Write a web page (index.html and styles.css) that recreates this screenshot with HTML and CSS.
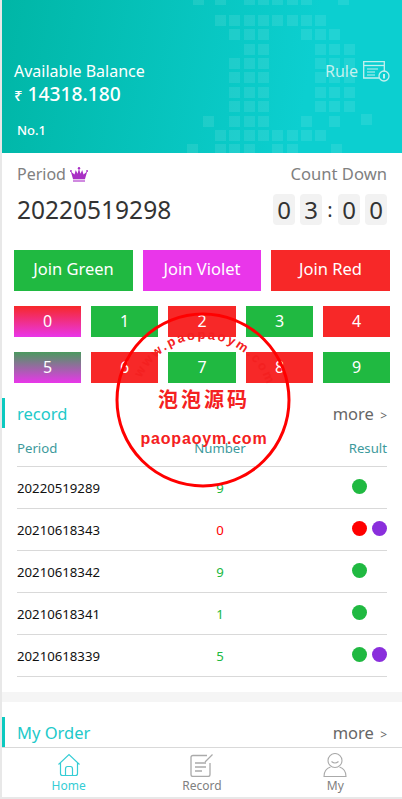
FILE: index.html
```html
<!DOCTYPE html>
<html>
<head>
    <title>Win</title>
    <meta name="viewport" content="width=device-width, initial-scale=1">
    <link rel="stylesheet" href="styles.css">
</head>
<body>
    <div class="page">
        <div class="content">
            <div class="hero">
                <svg class="hero-dots" width="400" height="153" viewBox="0 0 400 153">
                    <path d="M191 -6h11v11h-11z M213 -6h11v11h-11z M242 -6h11v11h-11z M256 -6h11v11h-11z M270 -6h11v11h-11z M285 -6h11v11h-11z M299 -6h11v11h-11z M336 -6h11v11h-11z
                             M213 15h11v11h-11z M227 15h11v11h-11z M242 15h11v11h-11z M256 15h11v11h-11z M270 15h11v11h-11z M285 15h11v11h-11z M299 15h11v11h-11z M313 15h11v11h-11z
                             M227 29h11v11h-11z M242 29h11v11h-11z M256 29h11v11h-11z M299 29h11v11h-11z M313 29h11v11h-11z M327 29h11v11h-11z
                             M242 44h11v11h-11z M256 44h11v11h-11z M313 44h11v11h-11z M327 44h11v11h-11z M342 44h11v11h-11z
                             M227 58h11v11h-11z M242 58h11v11h-11z M256 58h11v11h-11z M313 58h11v11h-11z M327 58h11v11h-11z M342 58h11v11h-11z
                             M227 72h11v11h-11z M242 72h11v11h-11z M256 72h11v11h-11z M313 72h11v11h-11z M327 72h11v11h-11z M342 72h11v11h-11z
                             M227 87h11v11h-11z M242 87h11v11h-11z M256 87h11v11h-11z M313 87h11v11h-11z M327 87h11v11h-11z M342 87h11v11h-11z
                             M227 101h11v11h-11z M242 101h11v11h-11z M256 101h11v11h-11z M313 101h11v11h-11z M327 101h11v11h-11z M342 101h11v11h-11z
                             M201 116h11v11h-11z M227 116h11v11h-11z M242 116h11v11h-11z M256 116h11v11h-11z M299 116h11v11h-11z M327 116h11v11h-11z M359 114h11v11h-11z
                             M213 130h11v11h-11z M227 130h11v11h-11z M242 130h11v11h-11z M256 130h11v11h-11z M270 130h11v11h-11z M285 130h11v11h-11z M299 130h11v11h-11z M313 130h11v11h-11z
                             M185 144h11v11h-11z M213 144h11v11h-11z M227 144h11v11h-11z M242 144h11v11h-11z M270 144h11v11h-11z M285 144h11v11h-11z M329 144h11v11h-11z"/>
                </svg>
                <div class="hero-row">
                    <div class="balance-label">Available Balance</div>
                    <div class="rule">
                        Rule
                        <svg width="27" height="21" viewBox="0 0 27 21" fill="none" stroke="#c4f1ef" stroke-width="1.300">
                            <path d="M16 17H.7V.7h20.600v10"/>
                            <path d="M1 4.500h20"/>
                            <path d="M4 8h11M4 11h8M4 14h8" stroke-width="1.100"/>
                            <circle cx="21" cy="15" r="5"/>
                            <path d="M21 13v4.500" stroke-width="2"/>
                        </svg>
                    </div>
                </div>
                <div class="balance"><span class="rupee">₹</span> 14318.180</div>
                <div class="rank">No.1</div>
            </div>

            <div class="game">
                <div class="period-row period-labels">
                    <div class="muted">Period
                        <svg class="crown" width="18" height="15" viewBox="0 0 18 15">
                            <path fill="#a92fc4" d="M3 12 .8 4.500l3.700 3L5.800 3 7.500 6.800 9 1.500l1.500 5.300L12.200 3l1.300 4.500 3.700-3L15 12z"/>
                            <circle fill="#a92fc4" cx=".9" cy="4" r="1"/>
                            <circle fill="#a92fc4" cx="9" cy="1.300" r="1.200"/>
                            <circle fill="#a92fc4" cx="17.100" cy="4" r="1"/>
                            <path fill="#d08ae0" d="M3 12.500h12V15H3z"/>
                        </svg>
                    </div>
                    <div class="muted countdown-label">Count Down</div>
                </div>
                <div class="period-row period-values">
                    <div class="period-no">20220519298</div>
                    <div class="timer">
                        <span class="digit">0</span>
                        <span class="digit">3</span>
                        <span class="colon">:</span>
                        <span class="digit">0</span>
                        <span class="digit">0</span>
                    </div>
                </div>

                <div class="joins">
                    <div class="join green">Join Green</div>
                    <div class="join violet">Join Violet</div>
                    <div class="join red">Join Red</div>
                </div>

                <div class="numbers">
                    <div class="num red-violet">0</div>
                    <div class="num green">1</div>
                    <div class="num red">2</div>
                    <div class="num green">3</div>
                    <div class="num red">4</div>
                    <div class="num green-violet">5</div>
                    <div class="num red">6</div>
                    <div class="num green">7</div>
                    <div class="num red">8</div>
                    <div class="num green">9</div>
                </div>
            </div>

            <div class="section-head">
                <div class="section-title">record</div>
                <div class="more">more <small>&gt;</small></div>
            </div>
            <div class="table">
                <div class="tr th">
                    <div>Period</div>
                    <div class="c-num">Number</div>
                    <div class="c-res">Result</div>
                </div>
                <div class="tr">
                    <div>20220519289</div>
                    <div class="c-num t-green">9</div>
                    <div class="c-res"><i class="dot d-green"></i><i class="dot"></i></div>
                </div>
                <div class="tr">
                    <div>20210618343</div>
                    <div class="c-num t-red">0</div>
                    <div class="c-res"><i class="dot d-red"></i><i class="dot d-violet"></i></div>
                </div>
                <div class="tr">
                    <div>20210618342</div>
                    <div class="c-num t-green">9</div>
                    <div class="c-res"><i class="dot d-green"></i><i class="dot"></i></div>
                </div>
                <div class="tr">
                    <div>20210618341</div>
                    <div class="c-num t-green">1</div>
                    <div class="c-res"><i class="dot d-green"></i><i class="dot"></i></div>
                </div>
                <div class="tr">
                    <div>20210618339</div>
                    <div class="c-num t-green">5</div>
                    <div class="c-res"><i class="dot d-green"></i><i class="dot d-violet"></i></div>
                </div>
            </div>

            <div class="divider"></div>

            <div class="section-head order-head">
                <div class="section-title">My Order</div>
                <div class="more">more <small>&gt;</small></div>
            </div>
        </div>

        <div class="nav">
            <div class="nav-item active">
                <svg width="24" height="24" viewBox="0 0 24 24" fill="none" stroke="#35cdd5" stroke-width="1.200">
                    <path d="M1.500 11.500 12 1.500l10.500 10"/>
                    <path d="M3.500 10v10.500q0 2 2 2h13q2 0 2-2V10"/>
                    <path d="M8.500 22v-6q0-2.500 2-2.500h3q2 0 2 2.500v6"/>
                </svg>
                <span>Home</span>
            </div>
            <div class="nav-item">
                <svg width="24" height="24" viewBox="0 0 24 24" fill="none" stroke="#aaa" stroke-width="1.300">
                    <path d="M17 2.500H3q-2 0-2 2v17q0 2 2 2h15q2 0 2-2V10"/>
                    <path d="M5 10h11M5 14h11M5 18h7"/>
                    <path d="M15 9l7.500-7.500"/>
                </svg>
                <span>Record</span>
            </div>
            <div class="nav-item">
                <svg width="24" height="24" viewBox="0 0 24 24" fill="none" stroke="#aaa" stroke-width="1.100">
                    <circle cx="12" cy="7.500" r="7"/>
                    <path d="M8.500 8.500q3.500 3 7 0"/>
                    <path d="M7.500 14C3 15.500 1 19 1 23.500h22c0-4.500-2-8-6.500-9.500"/>
                </svg>
                <span>My</span>
            </div>
        </div>

        <svg class="stamp" width="180" height="180" viewBox="0 0 180 180">
            <defs>
                <path id="stampArc" d="M28.400 68 A68 68 0 0 1 157.700 91"/>
            </defs>
            <circle cx="90" cy="90" r="86" fill="none" stroke="#f00" stroke-width="3"/>
            <text class="stamp-arc"><textPath href="#stampArc">www.paopaoym.com</textPath></text>
            <text class="stamp-cn" x="91" y="97" text-anchor="middle">泡泡源码</text>
            <text class="stamp-en" x="91" y="134" text-anchor="middle">paopaoym.com</text>
        </svg>
    </div>
</body>
</html>
```

FILE: styles.css
```css
* {
    box-sizing: border-box;
}
body {
    margin: 0;
    font-family: "Noto Sans", "Open Sans", sans-serif;
    background-color: #fff;
    color: #333;
}
.page {
    position: relative;
    width: 402px;
    height: 799px;
    display: flex;
    flex-direction: column;
    overflow: hidden;
    border-left: 2px solid #e8e8e8;
    border-bottom: 2px solid #e8e8e8;
}
.content {
    flex: 1;
    min-height: 0;
    overflow: hidden;
}

/* top banner */
.hero {
    position: relative;
    height: 153px;
    padding: 60px 12px 0;
    color: #fff;
    background: linear-gradient(100deg, #00b6a6 0%, #0ccfd0 75%);
}
.hero-dots {
    position: absolute;
    top: 0;
    left: 0;
    fill: rgba(255, 255, 255, 0.09);
}
.hero-row {
    position: relative;
    display: flex;
    justify-content: space-between;
    align-items: center;
    height: 22px;
}
.balance-label {
    font-size: 16px;
}
.rule {
    display: flex;
    align-items: center;
    gap: 5px;
    font-size: 16px;
    color: #c4f1ef;
}
.balance {
    position: relative;
    font-size: 19.200px;
    line-height: 24px;
    font-weight: 500;
}
.rupee {
    font-size: 15px;
}
.rank {
    position: relative;
    margin: 14px 0 0 3px;
    font-size: 13px;
    line-height: 18px;
    font-weight: 500;
}

/* period + buttons */
.game {
    padding: 0 12px;
}
.period-row {
    display: flex;
    justify-content: space-between;
    align-items: center;
    padding: 0 3px;
}
.period-labels {
    height: 41px;
}
.muted {
    display: flex;
    align-items: center;
    gap: 4px;
    font-size: 16px;
    color: #808080;
}
.countdown-label {
    font-size: 16.600px;
}
.crown {
    margin-top: 1px;
}
.period-values {
    height: 31px;
}
.period-no {
    font-size: 24.500px;
    color: #333;
}
.timer {
    display: flex;
    align-items: center;
    gap: 5px;
}
.digit {
    width: 22px;
    height: 31px;
    border-radius: 4px;
    background-color: #f2f2f2;
    text-align: center;
    font-size: 24px;
    line-height: 31px;
}
.colon {
    width: 6px;
    text-align: center;
    font-size: 20px;
}
.joins {
    display: grid;
    grid-template-columns: 119px 118px 119px;
    gap: 10px;
    margin-top: 25px;
}
.join {
    height: 41px;
    line-height: 38px;
    text-align: center;
    color: #fff;
    font-size: 16.500px;
}
.numbers {
    display: grid;
    grid-template-columns: 67px 67px 68px 67px 67px;
    grid-auto-rows: 31px;
    gap: 15px 10px;
    margin-top: 15px;
}
.num {
    line-height: 31px;
    text-align: center;
    color: #fff;
    font-size: 16px;
}
.green {
    background-color: #20b941;
}
.violet {
    background-color: #e936ea;
}
.red {
    background-color: #f72828;
}
.red-violet {
    background: linear-gradient(#f72828, #e936ea);
}
.green-violet {
    background: linear-gradient(#4a9a5e, #e936ea);
}

/* sections */
.section-head {
    display: flex;
    justify-content: space-between;
    align-items: center;
    height: 30px;
    margin-top: 15px;
    padding: 0 15px 0 12px;
    border-left: 3px solid #0cc9c0;
}
.section-title {
    font-size: 16.500px;
    color: #21c9c9;
}
.more {
    font-size: 16.500px;
    color: #666;
}
.more small {
    margin-left: 2px;
    font-size: 12px;
}
.table {
    padding: 0 15px;
}
.tr {
    display: grid;
    grid-template-columns: 150px 106px 1fr;
    align-items: center;
    height: 42px;
    padding-top: 1px;
    border-bottom: 1px solid #d9d9d9;
    font-size: 13.200px;
    color: #111;
}
.th {
    height: 39px;
    color: #3d9a9c;
}
.c-num {
    text-align: center;
}
.c-res {
    display: flex;
    justify-content: flex-end;
    gap: 5px;
}
.t-green {
    color: #20b941;
}
.t-red {
    color: #f00;
}
.dot {
    display: block;
    width: 15px;
    height: 15px;
    margin-top: -3px;
    border-radius: 50%;
}
.d-green {
    background-color: #20b941;
}
.d-red {
    background-color: #f00;
}
.d-violet {
    background-color: #8a2fdc;
}
.divider {
    height: 10px;
    margin-top: 15px;
    background-color: #f5f5f5;
}

/* bottom tabs */
.nav {
    display: grid;
    grid-template-columns: repeat(3, 1fr);
    height: 50px;
    border-top: 1px solid #d9d9d9;
    background-color: #fff;
}
.nav-item {
    display: flex;
    flex-direction: column;
    align-items: center;
    padding-top: 5px;
    font-size: 12px;
    line-height: 18px;
    color: #808080;
}
.nav-item.active {
    color: #35cdd5;
}

/* round watermark */
.stamp {
    position: absolute;
    top: 310px;
    left: 111px;
}
.stamp-arc {
    font-family: "Liberation Sans", sans-serif;
    font-size: 13px;
    font-weight: 700;
    letter-spacing: 2.100px;
    fill: #f42020;
}
.stamp-cn {
    font-family: "Noto Sans CJK SC", sans-serif;
    font-size: 20px;
    font-weight: 700;
    letter-spacing: 3px;
    fill: #f42020;
}
.stamp-en {
    font-family: "Liberation Sans", sans-serif;
    font-size: 16px;
    font-weight: 700;
    letter-spacing: 0.800px;
    fill: #f42020;
}
```
